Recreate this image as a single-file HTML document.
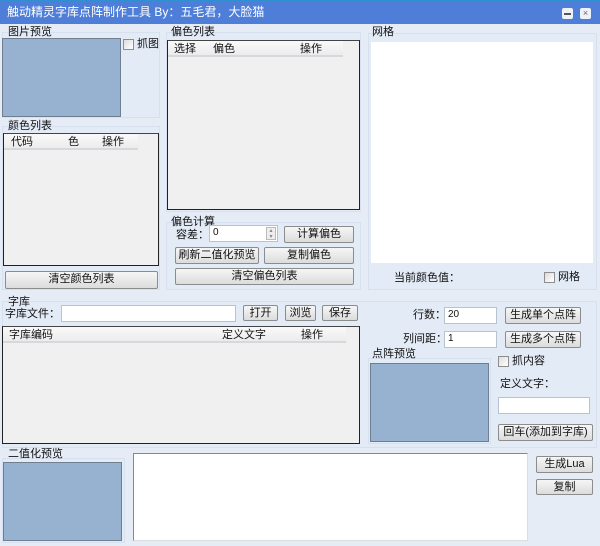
<!DOCTYPE html>
<html><head><meta charset="utf-8"><style>
*{margin:0;padding:0;box-sizing:border-box}
body{width:600px;height:546px;background:#e5ecf6;font:11px "Liberation Sans","Noto Sans CJK SC",sans-serif;color:#111;position:relative;overflow:hidden}
div,span{position:absolute}
.t{white-space:nowrap;line-height:13px}
.grp{border:1px solid #d6e0ee;background:#e3ebf6}
.blue{background:#97b2d0;border:1px solid #6f7f90}
.list{background:#f0f0f0;border:1px solid #222;border-top-color:#444}
.hdr{background:linear-gradient(#fafafa,#ececec);border-bottom:2px solid #d5d8dc;height:16px;left:0;top:0}
.btn{background:linear-gradient(#f6f6f6,#dcdcdc);border:1px solid #8c8c8c;border-radius:2px;text-align:center;line-height:15px;white-space:nowrap}
.inp{background:#fff;border:1px solid #b7c3d1;font-size:10px;padding-left:3px;line-height:14px}
.cb{width:11px;height:11px;border:1px solid #8d8d8d;background:linear-gradient(135deg,#ddd,#fff)}
</style></head><body>
<div style="left:0;top:0;width:600px;height:24px;background:#4f7ed9;border-top:1px solid #2f8fd0"></div>
<div class="t" style="left:7px;top:6px;color:#fff;font-size:12px">触动精灵字库点阵制作工具 By：五毛君，大脸猫</div>
<div style="left:562px;top:8px;width:11px;height:11px;background:#eef1f7;border-radius:2px"><div style="left:2px;top:5px;width:7px;height:2px;background:#555"></div></div>
<div style="left:580px;top:8px;width:11px;height:11px;background:#eef1f7;border-radius:2px;font-size:9px;line-height:11px;text-align:center;color:#666;width:11px">×</div>

<div class="grp" style="left:2px;top:32px;width:158px;height:86px"></div>
<div class="t" style="left:8px;top:26px">图片预览</div>
<div class="blue" style="left:2px;top:38px;width:119px;height:79px"></div>
<div class="cb" style="left:123px;top:39px"></div>
<div class="t" style="left:137px;top:38px">抓图</div>

<div class="grp" style="left:2px;top:126px;width:158px;height:164px"></div>
<div class="t" style="left:8px;top:120px">颜色列表</div>
<div class="list" style="left:3px;top:133px;width:156px;height:133px"><div class="hdr" style="width:134px"></div>
<span class="t" style="left:7px;top:2px">代码</span><span class="t" style="left:64px;top:2px">色</span><span class="t" style="left:98px;top:2px">操作</span></div>
<div class="btn" style="left:5px;top:271px;width:153px;height:18px">清空颜色列表</div>

<div class="grp" style="left:166px;top:32px;width:195px;height:180px"></div>
<div class="t" style="left:171px;top:26px">偏色列表</div>
<div class="list" style="left:167px;top:40px;width:193px;height:170px"><div class="hdr" style="width:175px"></div>
<span class="t" style="left:6px;top:2px">选择</span><span class="t" style="left:45px;top:2px">偏色</span><span class="t" style="left:132px;top:2px">操作</span></div>

<div class="grp" style="left:166px;top:222px;width:195px;height:68px"></div>
<div class="t" style="left:171px;top:216px">偏色计算</div>
<div class="t" style="left:176px;top:229px">容差：</div>
<div class="inp" style="left:209px;top:225px;width:69px;height:17px">0</div>
<div style="left:266px;top:227px;width:10px;height:13px;border:1px solid #bbb;background:#eee;font-size:6px;line-height:6px;text-align:center;color:#888">▴<br>▾</div>
<div class="btn" style="left:284px;top:226px;width:70px;height:17px">计算偏色</div>
<div class="btn" style="left:175px;top:247px;width:84px;height:17px">刷新二值化预览</div>
<div class="btn" style="left:264px;top:247px;width:90px;height:17px">复制偏色</div>
<div class="btn" style="left:175px;top:268px;width:179px;height:17px">清空偏色列表</div>

<div class="grp" style="left:368px;top:33px;width:229px;height:257px"></div>
<div class="t" style="left:372px;top:26px">网格</div>
<div style="left:371px;top:42px;width:222px;height:221px;background:#fff"></div>
<div class="t" style="left:394px;top:272px">当前颜色值：</div>
<div class="cb" style="left:544px;top:272px"></div>
<div class="t" style="left:558px;top:271px">网格</div>

<div class="grp" style="left:2px;top:301px;width:595px;height:147px"></div>
<div class="t" style="left:8px;top:296px">字库</div>
<div class="t" style="left:5px;top:308px">字库文件：</div>
<div class="inp" style="left:61px;top:305px;width:175px;height:17px"></div>
<div class="btn" style="left:243px;top:305px;width:35px;height:16px">打开</div>
<div class="btn" style="left:285px;top:305px;width:31px;height:16px">浏览</div>
<div class="btn" style="left:322px;top:305px;width:36px;height:16px">保存</div>
<div class="list" style="left:2px;top:326px;width:358px;height:118px"><div class="hdr" style="width:343px"></div>
<span class="t" style="left:6px;top:2px">字库编码</span><span class="t" style="left:219px;top:2px">定义文字</span><span class="t" style="left:298px;top:2px">操作</span></div>
<div class="t" style="left:413px;top:309px">行数：</div>
<div class="inp" style="left:444px;top:307px;width:53px;height:17px">20</div>
<div class="btn" style="left:505px;top:307px;width:76px;height:17px">生成单个点阵</div>
<div class="t" style="left:403px;top:333px">列间距：</div>
<div class="inp" style="left:444px;top:331px;width:53px;height:17px">1</div>
<div class="btn" style="left:505px;top:331px;width:76px;height:17px">生成多个点阵</div>
<div class="grp" style="left:368px;top:358px;width:123px;height:86px"></div>
<div class="t" style="left:372px;top:348px">点阵预览</div>
<div class="blue" style="left:370px;top:363px;width:119px;height:79px"></div>
<div class="cb" style="left:498px;top:356px"></div>
<div class="t" style="left:512px;top:355px">抓内容</div>
<div class="t" style="left:500px;top:378px">定义文字：</div>
<div class="inp" style="left:498px;top:397px;width:92px;height:17px"></div>
<div class="btn" style="left:498px;top:424px;width:95px;height:17px">回车(添加到字库)</div>

<div class="grp" style="left:2px;top:458px;width:123px;height:85px"></div>
<div class="t" style="left:8px;top:448px">二值化预览</div>
<div class="blue" style="left:3px;top:462px;width:119px;height:79px"></div>
<div style="left:133px;top:453px;width:395px;height:88px;background:#fff;border:1px solid #888;border-right-color:#ddd;border-bottom-color:#ddd"></div>
<div class="btn" style="left:536px;top:456px;width:57px;height:17px">生成Lua</div>
<div class="btn" style="left:536px;top:479px;width:57px;height:16px">复制</div>
</body></html>
